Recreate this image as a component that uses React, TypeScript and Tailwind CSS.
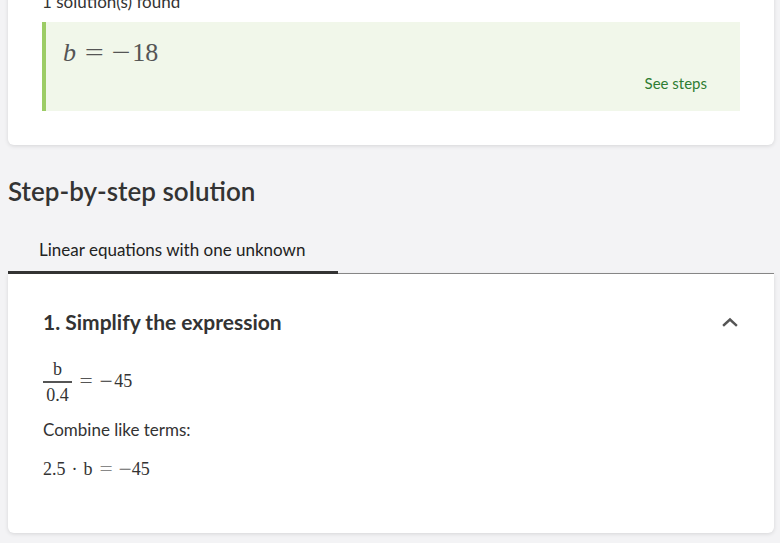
import React from "react";

const sans = { fontFamily: "Lato, 'Noto Sans', sans-serif" };
const serif = { fontFamily: "'Liberation Serif', 'DejaVu Serif', serif" };

export default function App() {
  return (
    <div className="w-[780px] h-[543px] overflow-hidden bg-[#f3f3f5] text-[#333]" style={sans}>
      <div className="pl-[8px] pr-[6px]">
        {/* Card 1 */}
        <div className="bg-white rounded-b-[6px] shadow-[0_1px_4px_rgba(0,0,0,0.12)] mt-[-30px] pt-[22px] pb-[34px] pl-[34px] pr-[34px]">
          <div className="text-[17px] leading-[20px] text-[#333] mb-[10px]">1 solution(s) found</div>
          <div className="bg-[#f1f7ea] border-l-[4px] border-[#9ccc65] h-[89px] flex flex-col justify-between pl-[17px] pr-[33px] pt-[16px] pb-[19px]">
            <div className="text-[26px] leading-[30px] text-[#555] flex items-center" style={serif}>
              <span className="italic">b</span>
              <span className="ml-[11px] mr-[12px] scale-x-[1.3]">=</span>
              <span className="scale-x-[1.3] mr-[4px]">−</span>
              <span>18</span>
            </div>
            <div className="self-end text-[15px] leading-[18px] text-[#2e7d32]">See steps</div>
          </div>
        </div>

        {/* Heading */}
        <h2 className="mt-[30px] text-[26px] leading-[32px] font-semibold text-[#333]">Step-by-step solution</h2>

        {/* Tabs */}
        <div className="mt-[33px] flex items-end border-b border-[#8a8a8a]">
          <div className="w-[330px] pl-[31px] pb-[11px] border-b-[3px] border-[#333] mb-[-1px] text-[17px] leading-[20px] text-[#222]">
            Linear equations with one unknown
          </div>
        </div>

        {/* Card 2 */}
        <div className="bg-white rounded-b-[6px] shadow-[0_1px_4px_rgba(0,0,0,0.12)] h-[259px] pt-[35px] pl-[35px] pr-[36px]">
          <div className="flex items-center justify-between h-[26px]">
            <div className="text-[21px] leading-[26px] font-bold text-[#333]">1. Simplify the expression</div>
            <svg width="16" height="10" viewBox="0 0 16 10" fill="none" stroke="#555" strokeWidth="2.4" strokeLinecap="square" strokeLinejoin="miter">
              <path d="M2 8l6-5.5 6 5.5" />
            </svg>
          </div>

          <div className="mt-[24px] flex items-center text-[#333]" style={serif}>
            <div className="flex flex-col items-center w-[29px]">
              <span className="text-[18px] leading-[20px]">b</span>
              <span className="w-[29px] h-[1.5px] bg-[#555] mt-[2px] mb-[2px]"></span>
              <span className="text-[18px] leading-[20px]">0.4</span>
            </div>
            <span className="text-[18px] ml-[9px] scale-x-[1.3] text-[#555]">=</span>
            <span className="text-[18px] ml-[10px] scale-x-[1.3]">−</span>
            <span className="text-[18px] ml-[3px]">45</span>
          </div>

          <div className="mt-[15px] text-[17px] leading-[20px] text-[#333]">Combine like terms:</div>

          <div className="mt-[19px] h-[22px] flex items-center text-[18px] text-[#333]" style={serif}>
            <span>2.5</span>
            <span className="mx-[6px]">·</span>
            <span>b</span>
            <span className="ml-[8px] mr-[9px] scale-x-[1.3] text-[#888]">=</span>
            <span className="scale-x-[1.3] text-[#666]">−</span>
            <span className="ml-[2px]">45</span>
          </div>
        </div>
      </div>
    </div>
  );
}
